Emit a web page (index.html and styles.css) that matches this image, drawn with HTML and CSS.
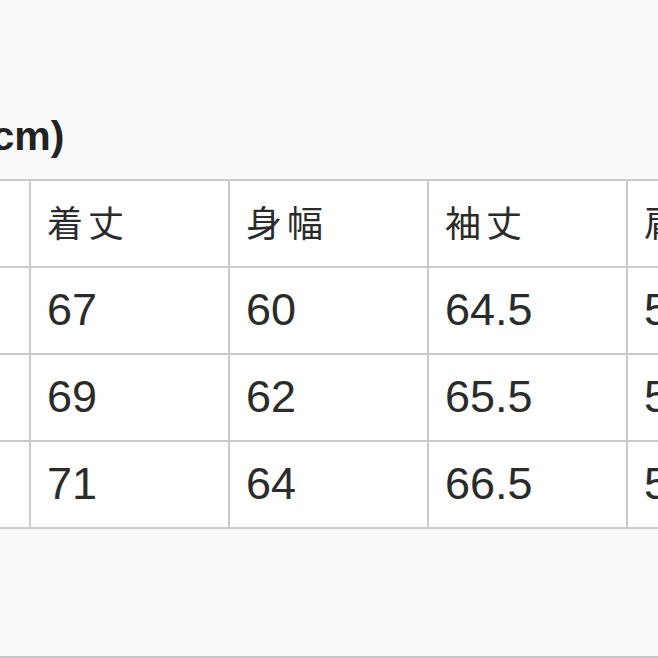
FILE: index.html
```html
<!DOCTYPE html>
<html lang="ja">
<head>
<meta charset="utf-8">
<title>サイズ表</title>
<link rel="stylesheet" href="styles.css">
</head>
<body>
<div class="page">
  <h2 class="title">サイズ(cm)</h2>
  <table class="size-table">
    <tr><td></td><td>着丈</td><td>身幅</td><td>袖丈</td><td>肩幅</td></tr>
    <tr><td class="size">S</td><td>67</td><td>60</td><td>64.5</td><td>52</td></tr>
    <tr><td class="size">M</td><td>69</td><td>62</td><td>65.5</td><td>54</td></tr>
    <tr><td class="size">L</td><td>71</td><td>64</td><td>66.5</td><td>56</td></tr>
  </table>
</div>
</body>
</html>
```
FILE: styles.css
```css
html, body {
  margin: 0;
  padding: 0;
  overflow: hidden;
  background: #f9f9f9;
}
.page {
  width: 1200px;
  height: 658px;
  box-sizing: border-box;
  margin-left: -170px;
  padding-top: 112px;
  border-bottom: 2px solid #c6c6c6;
  font-family: "Liberation Sans", "Noto Sans CJK JP", sans-serif;
  color: #2b2b2b;
}
.title {
  margin: 0 0 19px 0;
  padding-left: 26px;
  font-size: 41px;
  line-height: 48px;
  font-weight: bold;
  color: #222;
}
.size-table {
  border-collapse: collapse;
  table-layout: fixed;
  background: #fff;
}
.size-table td {
  width: 165px;
  height: 83px;
  padding: 0 16px 2px 16px;
  border: 2px solid #cacaca;
  font-size: 45px;
  vertical-align: middle;
  white-space: nowrap;
}
.size-table tr:first-child td {
  height: 79px;
  font-size: 36px;
  letter-spacing: 5px;
  padding-bottom: 6px;
}
```
